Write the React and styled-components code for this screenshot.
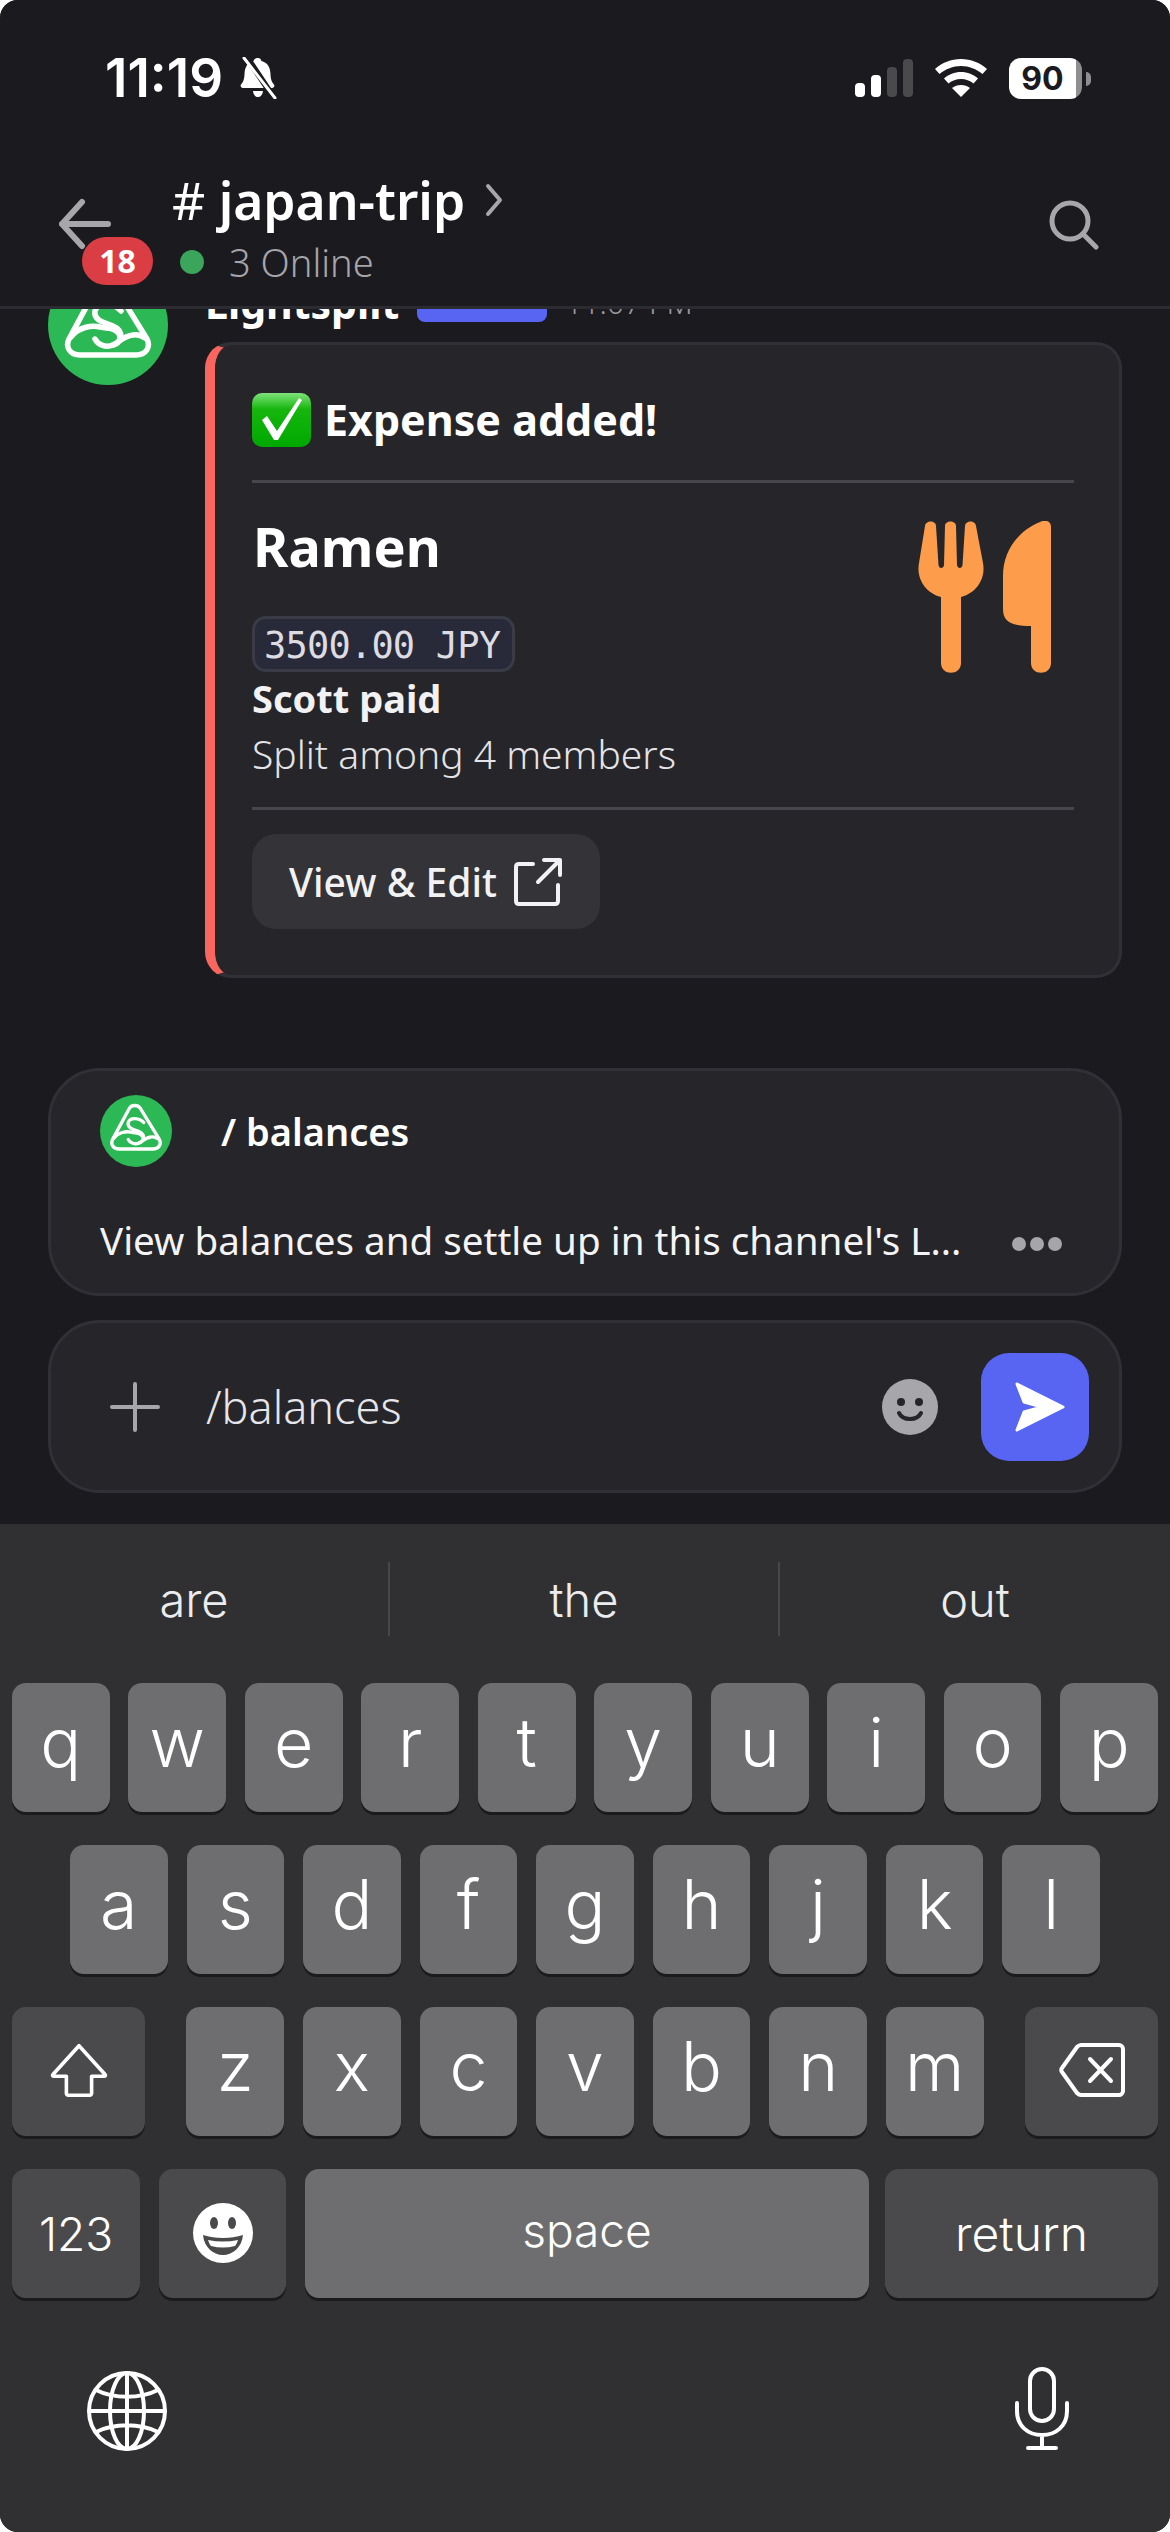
import styled, { createGlobalStyle } from "styled-components";

const Global = createGlobalStyle`
  html, body { margin: 0; padding: 0; background: #fff; }
  * { box-sizing: border-box; }
`;

const ui = `"Noto Sans", "Open Sans", sans-serif`;
const ios = `Inter, "Liberation Sans", sans-serif`;

const Screen = styled.div`
  width: 1170px;
  height: 2532px;
  background: #1a1a1f;
  border-radius: 18px;
  overflow: hidden;
  display: flex;
  flex-direction: column;
  font-family: ${ui};
  color: #fff;
`;

const StatusBar = styled.div`
  height: 130px;
  flex: none;
  display: flex;
  align-items: flex-start;
  justify-content: space-between;
  padding: 49px 88px 0 105px;
  background: #1a1a1f;
`;

const Clock = styled.div`
  display: flex;
  align-items: center;
  gap: 15px;
  font: 600 53px/58px ${ios};
`;

const StatusIcons = styled.div`
  display: flex;
  align-items: center;
  gap: 22px;
  height: 58px;
`;

const Battery = styled.div`
  position: relative;
  width: 73px;
  height: 41px;
  border-radius: 12px;
  background: linear-gradient(90deg, #fff 92%, #8e8e90 92%);
  color: #1a1a1f;
  font: 700 32px/41px ${ios};
  text-align: center;
  padding-right: 6px;
  &::after {
    content: "";
    position: absolute;
    right: -9px;
    top: 14px;
    width: 5px;
    height: 14px;
    border-radius: 0 6px 6px 0;
    background: #8e8e90;
  }
`;

const Header = styled.header`
  height: 179px;
  flex: none;
  position: relative;
  z-index: 2;
  display: flex;
  align-items: flex-start;
  padding: 39px 71px 0 58px;
  background: #1a1a1f;
  border-bottom: 3px solid #2b2b31;
`;

const Back = styled.div`
  position: relative;
  width: 114px;
  height: 100px;
  padding-top: 29px;
  flex: none;
`;

const Badge = styled.span`
  position: absolute;
  left: 24px;
  top: 68px;
  width: 71px;
  height: 48px;
  border-radius: 24px;
  background: #da3e44;
  font: 700 32px/48px ${ui};
  text-align: center;
`;

const TitleBlock = styled.div`
  flex: 1;
`;

const Title = styled.div`
  display: flex;
  align-items: center;
  font: 600 51.5px/62px ${ui};
  gap: 20px;
  span {
    font-weight: 400;
  }
`;

const Presence = styled.div`
  display: flex;
  align-items: center;
  gap: 25px;
  margin: 8px 0 0 8px;
  font: 300 38px/46px ${ui};
  color: #a5a5aa;
`;

const Dot = styled.i`
  width: 24px;
  height: 24px;
  border-radius: 50%;
  background: #3ba55c;
`;

const Messages = styled.main`
  flex: 1;
  min-height: 0;
  overflow: hidden;
  display: flex;
  flex-direction: column;
  justify-content: flex-end;
  padding: 0 48px 90px;
`;

const Message = styled.article`
  display: flex;
  gap: 37px;
`;

const Body = styled.div`
  width: 917px;
`;

const Meta = styled.div`
  height: 77px;
  display: flex;
  align-items: flex-start;
  gap: 18px;
  padding-top: 10px;
  font: 700 41px/56px ${ui};
`;

const AppTag = styled.span`
  width: 130px;
  height: 46px;
  margin-top: 1px;
  border-radius: 8px;
  background: #5865f2;
  font: 700 26px/46px ${ui};
  text-align: center;
`;

const Time = styled.span`
  font: 300 30px/56px ${ui};
  color: #9a9aa0;
`;

const Card = styled.section`
  height: 636px;
  padding: 45px 45px 0 37px;
  background: #25252a;
  border: 3px solid #303036;
  border-left: 10px solid #f8665f;
  border-radius: 26px;
`;

const CardHead = styled.div`
  display: flex;
  align-items: center;
  gap: 12px;
  height: 60px;
  margin-bottom: 30px;
  font: 700 43px/64px ${ui};
`;

const Rule = styled.div`
  height: 3px;
  background: #46464c;
`;

const Fields = styled.div`
  display: flex;
  justify-content: space-between;
  align-items: flex-start;
  padding: 30px 22px 28px 0;
`;

const Dish = styled.h2`
  margin: 0 0 33px;
  font: 700 54px/66px ${ui};
  padding: 0 0 4px 1px;
`;

const Amount = styled.code`
  display: block;
  width: 263px;
  height: 56px;
  border-radius: 14px;
  border: 3px solid #3a3b46;
  background: #282a3a;
  color: #dcdce2;
  font: 300 37px/54px "DejaVu Sans Mono", "Liberation Mono", monospace;
  letter-spacing: -0.8px;
  padding-left: 9px;
  white-space: nowrap;
`;

const Payer = styled.div`
  font: 700 38px/50px ${ui};
  color: #f2f2f4;
  margin-top: 1px;
`;

const Split = styled.div`
  font: 300 39px/50px ${ui};
  color: #e4e4e8;
  margin-top: 6px;
`;

const EditButton = styled.div`
  width: 348px;
  height: 95px;
  margin-top: 24px;
  border-radius: 24px;
  background: #333338;
  display: flex;
  align-items: center;
  gap: 16px;
  padding-left: 37px;
  font: 500 39px/50px ${ui};
  color: #f2f2f4;
`;

const Composer = styled.div`
  flex: none;
  display: flex;
  flex-direction: column;
  gap: 24px;
  padding: 0 48px 31px;
`;

const Panel = styled.div`
  background: #25252a;
  border: 3px solid #303036;
  border-radius: 52px;
`;

const Suggestion = styled(Panel)`
  height: 228px;
  padding: 22px 49px 0;
`;

const CommandRow = styled.div`
  display: flex;
  align-items: center;
  gap: 49px;
  height: 76px;
  font: 600 38px/46px ${ui};
`;

const DescRow = styled.div`
  display: flex;
  align-items: center;
  justify-content: space-between;
  margin-top: 41px;
  height: 60px;
  padding-right: 8px;
  font: 400 38.6px/60px ${ui};
  color: #f4f4f6;
  white-space: nowrap;
`;

const More = styled.div`
  display: flex;
  gap: 4px;
  margin-top: 8px;
  i {
    width: 14px;
    height: 14px;
    border-radius: 50%;
    background: #a5a5aa;
  }
`;

const InputBar = styled(Panel)`
  height: 173px;
  display: flex;
  align-items: center;
  padding: 0 30px 0 59px;
`;

const Draft = styled.div`
  flex: 1;
  margin-left: 46px;
  font: 300 45px/60px ${ui};
  color: #e6e6ea;
`;

const SendButton = styled.div`
  width: 108px;
  height: 108px;
  margin-left: 43px;
  border-radius: 28px;
  background: #5865f2;
  display: flex;
  align-items: center;
  justify-content: center;
  padding-left: 8px;
`;

const Keyboard = styled.div`
  flex: none;
  height: 1008px;
  background: #303032;
  font-family: ${ios};
`;

const Predictions = styled.div`
  height: 159px;
  padding-top: 38px;
  display: grid;
  grid-template-columns: repeat(3, 1fr);
`;

const Prediction = styled.div`
  height: 74px;
  text-align: center;
  font: 300 47px/76px ${ios};
  color: #ececee;
  border-right: ${(p) => (p.$last ? "none" : "2px solid #47474a")};
`;

const KeyRows = styled.div`
  display: flex;
  flex-direction: column;
  gap: 33px;
`;

const KeyRow = styled.div`
  display: flex;
  justify-content: space-between;
  padding: 0 ${(p) => p.$inset || 12}px;
`;

const InnerKeys = styled.div`
  display: flex;
  gap: 19px;
`;

const Key = styled.div`
  flex: none;
  width: ${(p) => p.$w || 97.6}px;
  height: 129px;
  border-radius: 14px;
  background: ${(p) => (p.$dark ? "#4a4a4c" : "#6e6e70")};
  box-shadow: 0 3px 0 #1b1b1d;
  display: flex;
  align-items: center;
  justify-content: center;
  font: 300 ${(p) => p.$size || 68}px/1 ${ios};
  color: #fff;
  padding-bottom: ${(p) => p.$lift ?? 12}px;
`;

const KeyboardFoot = styled.div`
  display: flex;
  justify-content: space-between;
  align-items: flex-end;
  padding: 69px 100px 0 87px;
`;

function Logo({ size }) {
  return (
    <svg width={size} height={size} viewBox="0 0 120 120" style={{ flex: "none", display: "block" }}>
      <circle cx="60" cy="60" r="60" fill="#2cb854" />
      <g fill="none" stroke="#fff" strokeWidth="5.500" strokeLinecap="round" strokeLinejoin="round">
        <path d="M32 90H88C98 90 103 82 99 74L67 22C63 16 53 16 49 22L21 74C17 82 22 90 32 90Z" />
        <path d="M23 72C30 62 44 60 52 62C58 64 63 62 68 66C74 70 73 78 65 80C58 83 50 80 47 74" />
        <path d="M73 46C66 38 50 36 47 46C45 56 58 58 65 61C70 63 73 67 73 72" />
        <path d="M65 80C71 77 76 71 85 70C90 69 94 71 97 73" />
      </g>
    </svg>
  );
}

const keysTop = ["q", "w", "e", "r", "t", "y", "u", "i", "o", "p"];
const keysMid = ["a", "s", "d", "f", "g", "h", "j", "k", "l"];
const keysLow = ["z", "x", "c", "v", "b", "n", "m"];

export default function App() {
  return (
    <Screen>
      <Global />
      <StatusBar>
        <Clock>
          11:19
          <svg width="40" height="42" viewBox="0 0 40 42">
            <path fill="#fff" d="M20 1c2 0 3 1 3.400 3 6 1.500 8.600 6 9 12 .3 5 .6 8 3.600 11.500 1 1.500 0 3.500-2 3.500H5c-2 0-3-2-2-3.500C6 24 6.300 21 6.600 16c.4-6 3-10.500 9-12C16 2 18 1 20 1z" />
            <path fill="#fff" d="M15 34h10c-.5 4-2.500 6-5 6s-4.500-2-5-6z" />
            <path stroke="#1a1a1f" strokeWidth="6" d="M8 -1l28 42" />
            <path stroke="#fff" strokeWidth="3" strokeLinecap="round" d="M6 1l31 40" />
          </svg>
        </Clock>
        <StatusIcons>
          <svg width="58" height="38" viewBox="0 0 58 38">
            <rect x="0" y="24" width="10" height="14" rx="4" fill="#fff" />
            <rect x="16" y="16" width="10" height="22" rx="4" fill="#fff" />
            <rect x="32" y="8" width="10" height="30" rx="4" fill="#4a4a4c" />
            <rect x="48" y="0" width="10" height="38" rx="4" fill="#4a4a4c" />
          </svg>
          <svg width="52" height="38" viewBox="0 0 52 38">
            <path fill="#fff" d="M26 0c10 0 19 3.800 26 10l-4.500 5C41.500 10 34 7 26 7S10.500 10 4.500 15L0 10C7 3.800 16 0 26 0z" />
            <path fill="#fff" d="M26 13c6.500 0 12.500 2.400 17 6.500L38.500 24.500C35 21.500 30.700 20 26 20s-9 1.500-12.500 4.500L9 19.500C13.500 15.400 19.500 13 26 13z" />
            <path fill="#fff" d="M26 26c3.500 0 6.500 1 9 3L26 38l-9-9c2.500-2 5.500-3 9-3z" />
          </svg>
          <Battery>90</Battery>
        </StatusIcons>
      </StatusBar>

      <Header>
        <Back>
          <svg width="54" height="52" viewBox="0 0 54 52" fill="none" stroke="#a6a6ab" strokeWidth="6" strokeLinecap="round" strokeLinejoin="round">
            <path d="M24 4L4 26l20 22M4 26h46" />
          </svg>
          <Badge>18</Badge>
        </Back>
        <TitleBlock>
          <Title>
            <div>
              <span>#</span> japan-trip
            </div>
            <svg width="18" height="34" viewBox="0 0 18 34" fill="none" stroke="#a6a6ab" strokeWidth="4" strokeLinecap="round" strokeLinejoin="round">
              <path d="M3 3l12 14L3 31" />
            </svg>
          </Title>
          <Presence>
            <Dot />3 Online
          </Presence>
        </TitleBlock>
        <svg width="50" height="50" viewBox="0 0 50 50" fill="none" stroke="#a6a6ab" strokeWidth="5" strokeLinecap="round" style={{ marginTop: 31 }}>
          <circle cx="21" cy="21" r="18" />
          <path d="M34 34l13 13" />
        </svg>
      </Header>

      <Messages>
        <Message>
          <Logo size={120} />
          <Body>
            <Meta>
              Lightsplit
              <AppTag>✓ APP</AppTag>
              <Time>11:07 PM</Time>
            </Meta>
            <Card>
              <CardHead>
                <svg width="60" height="60" viewBox="0 0 60 60">
                  <defs>
                    <linearGradient id="tick" x1="0" y1="0" x2="0" y2="1">
                      <stop offset="0" stopColor="#7fe27a" />
                      <stop offset="0.3" stopColor="#16b60e" />
                      <stop offset="1" stopColor="#00a800" />
                    </linearGradient>
                  </defs>
                  <rect x="0" y="3" width="59" height="54" rx="10" fill="url(#tick)" />
                  <path fill="#fff" d="M10 30l5-4 10 15L47 8l3 2-24 40h-4z" />
                </svg>
                Expense added!
              </CardHead>
              <Rule />
              <Fields>
                <div>
                  <Dish>Ramen</Dish>
                  <Amount>3500.00 JPY</Amount>
                  <Payer>Scott paid</Payer>
                  <Split>Split among 4 members</Split>
                </div>
                <svg width="134" height="152" viewBox="0 0 134 152" fill="#fd9c4a" style={{ marginTop: 8 }}>
                  <path d="M7 5C7.500 -1 18 -1 18 5L20.500 44C21 48 25.500 48 26 44L27 5C27 -1 38 -1 38 5L39 44C39.500 48 44 48 44.500 44L47 5C47.500 -1 57.500 -1 58 5L65 42C68 58 58 72 43 76L43 142C43 155 23 155 23 142L23 76C8 72 -2 58 1 42Z" />
                  <path d="M133 6C133 0 127 -2 122 1C100 10 85 30 85 55L85 88C85 100 92 105 113 105L113 142C113 155 133 155 133 142Z" />
                </svg>
              </Fields>
              <Rule />
              <EditButton>
                View &amp; Edit
                <svg width="50" height="50" viewBox="0 0 50 50" fill="none" stroke="#f2f2f4" strokeWidth="4" strokeLinecap="round" strokeLinejoin="round">
                  <path d="M20 7H6c-2 0-3 1-3 3v34c0 2 1 3 3 3h36c2 0 3-1 3-3V28" />
                  <path d="M25 25L47 3M31 3h16v15" />
                </svg>
              </EditButton>
            </Card>
          </Body>
        </Message>
      </Messages>

      <Composer>
        <Suggestion>
          <CommandRow>
            <Logo size={72} />/ balances
          </CommandRow>
          <DescRow>
            View balances and settle up in this channel's L...
            <More>
              <i />
              <i />
              <i />
            </More>
          </DescRow>
        </Suggestion>
        <InputBar>
          <svg width="50" height="50" viewBox="0 0 50 50" stroke="#a6a6ab" strokeWidth="4" strokeLinecap="round">
            <path d="M25 2v46M2 25h46" />
          </svg>
          <Draft>/balances</Draft>
          <svg width="56" height="56" viewBox="0 0 56 56">
            <circle cx="28" cy="28" r="28" fill="#a6a6ab" />
            <circle cx="19" cy="23" r="4" fill="#25252a" />
            <circle cx="37" cy="23" r="4" fill="#25252a" />
            <path d="M17 34c4 8 18 8 22 0" fill="none" stroke="#25252a" strokeWidth="4" strokeLinecap="round" />
          </svg>
          <SendButton>
            <svg width="52" height="50" viewBox="0 0 52 50">
              <path fill="#fff" stroke="#fff" strokeWidth="3" strokeLinejoin="round" d="M4 2l46 23L4 48l7-18 18-5-18-5z" />
            </svg>
          </SendButton>
        </InputBar>
      </Composer>

      <Keyboard>
        <Predictions>
          <Prediction>are</Prediction>
          <Prediction>the</Prediction>
          <Prediction $last>out</Prediction>
        </Predictions>
        <KeyRows>
          <KeyRow>
            {keysTop.map((k) => (
              <Key key={k}>{k}</Key>
            ))}
          </KeyRow>
          <KeyRow $inset={70}>
            {keysMid.map((k) => (
              <Key key={k}>{k}</Key>
            ))}
          </KeyRow>
          <KeyRow>
            <Key $w={133} $dark $lift={4}>
              <svg width="62" height="54" viewBox="0 0 64 60" fill="none" stroke="#fff" strokeWidth="4" strokeLinejoin="round">
                <path d="M32 3L3 35c-1 1 0 2 1 2h14v19c0 1 1 2 2 2h24c1 0 2-1 2-2V37h14c1 0 2-1 1-2z" />
              </svg>
            </Key>
            <InnerKeys>
              {keysLow.map((k) => (
                <Key key={k}>{k}</Key>
              ))}
            </InnerKeys>
            <Key $w={133} $dark $lift={4}>
              <svg width="66" height="54" viewBox="0 0 66 54" fill="none" stroke="#fff" strokeWidth="4" strokeLinejoin="round" strokeLinecap="round">
                <path d="M22 2h38c2 0 4 2 4 4v42c0 2-2 4-4 4H22c-2 0-3-1-4-2L3 29c-1-1-1-3 0-4L18 4c1-1 2-2 4-2z" />
                <path d="M31 16l21 22M52 16L31 38" />
              </svg>
            </Key>
          </KeyRow>
          <KeyRow>
            <InnerKeys>
              <Key $w={128} $dark $size={46} $lift={0}>
                123
              </Key>
              <Key $w={127} $dark $lift={2}>
                <svg width="60" height="60" viewBox="0 0 60 60">
                  <circle cx="30" cy="30" r="30" fill="#fff" />
                  <ellipse cx="21" cy="20" rx="4" ry="6" fill="#4a4a4c" />
                  <ellipse cx="39" cy="20" rx="4" ry="6" fill="#4a4a4c" />
                  <path d="M10 32c12 4 28 4 40 0-1 12-10 20-20 20s-19-8-20-20z" fill="#4a4a4c" />
                  <path d="M15 37c10 2 20 2 30 0-1 3-2 5-3 6-8 2-16 2-24 0-1-1-2-3-3-6z" fill="#fff" />
                </svg>
              </Key>
              <Key $w={564} $size={46} $lift={8}>
                space
              </Key>
            </InnerKeys>
            <Key $w={273} $dark $size={48} $lift={0}>
              return
            </Key>
          </KeyRow>
        </KeyRows>
        <KeyboardFoot>
          <svg width="80" height="80" viewBox="0 0 80 80" fill="none" stroke="#fff" strokeWidth="4">
            <circle cx="40" cy="40" r="38" />
            <ellipse cx="40" cy="40" rx="17" ry="38" />
            <path d="M40 2v76M2 40h76M9 19c18 9 44 9 62 0M9 61c18-9 44-9 62 0" />
          </svg>
          <svg width="56" height="84" viewBox="0 0 56 84" fill="none" stroke="#fff" strokeWidth="4" strokeLinecap="round">
            <rect x="16" y="2" width="24" height="52" rx="12" />
            <path d="M3 36v8c0 15 11 24 25 24s25-9 25-24v-8M28 68v12M14 81h28" />
          </svg>
        </KeyboardFoot>
      </Keyboard>
    </Screen>
  );
}
